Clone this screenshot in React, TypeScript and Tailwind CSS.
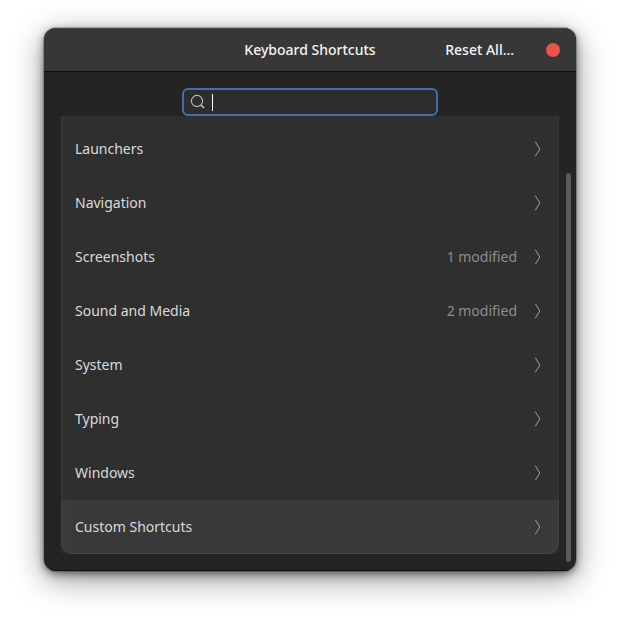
import React from "react";

type Category = { name: string; modified?: number };

const categories: Category[] = [
  { name: "Launchers" },
  { name: "Navigation" },
  { name: "Screenshots", modified: 1 },
  { name: "Sound and Media", modified: 2 },
  { name: "System" },
  { name: "Typing" },
  { name: "Windows" },
  { name: "Custom Shortcuts" },
];

function Chevron() {
  return (
    <svg aria-hidden="true" className="h-4 w-2 shrink-0" viewBox="0 0 8 16" fill="none" stroke="#a0a0a0" strokeWidth="1">
      <path d="M2.300 .8 6.800 8l-4.500 7.200" />
    </svg>
  );
}

function SearchIcon() {
  return (
    <svg aria-hidden="true" className="size-4 shrink-0" viewBox="0 0 16 16" fill="none" stroke="#bdbdbd">
      <circle cx="7" cy="7" r="5.600" strokeWidth="1.100" />
      <path d="m10.800 10.800 3.200 3.200" strokeWidth="1.700" />
    </svg>
  );
}

function HeaderBar() {
  return (
    <header className="grid h-11 grid-cols-[1fr_auto_1fr] items-center border-b border-[#101010] bg-[#373737] px-4 font-medium text-[#f4f4f4] shadow-[inset_0_1px_0_#464646]">
      <h1 className="col-start-2">Keyboard Shortcuts</h1>
      <div className="flex items-center justify-end gap-8">
        <button type="button">Reset All…</button>
        <button type="button" aria-label="Close" className="size-3.5 rounded-full bg-[#ec5349]" />
      </div>
    </header>
  );
}

function CategoryRow({ category }: { category: Category }) {
  return (
    <li className="last:bg-white/5">
      <button type="button" className="flex h-[54px] w-full items-center pr-[18px] pl-3.5 text-left">
        <span className="flex-1 text-[#dadada]">{category.name}</span>
        {category.modified && <span className="mr-4 text-[#8a8e8f]">{category.modified} modified</span>}
        <Chevron />
      </button>
    </li>
  );
}

export default function App() {
  return (
    <div className="bg-white px-11 pt-7 pb-[60px] font-['Noto_Sans','Open_Sans',sans-serif] text-[14px] leading-5">
      <div className="overflow-hidden rounded-xl bg-[#242424] shadow-[0_0_0_1px_rgba(0,0,0,0.2),0_3px_9px_rgba(0,0,0,0.5),0_8px_32px_rgba(0,0,0,0.42)]">
        <HeaderBar />
        <main className="flex gap-[7px] pr-[5px] pl-[17px] shadow-[inset_0_-1px_0_#111]">
          <div className="flex-1 pt-4 pb-[17px]">
            <label className="mx-auto flex h-7 w-64 items-center rounded-md border-2 border-[#426db3] bg-[#2d2d2d] pl-1.5">
              <SearchIcon />
              <span aria-hidden="true" className="ml-1.5 h-[17px] w-px shrink-0 bg-white" />
              <input
                type="text"
                aria-label="Search shortcuts"
                className="min-w-0 flex-1 bg-transparent text-[#eeeeee] caret-transparent outline-none"
              />
            </label>
            <div className="bg-[#2b2b2b]">
              <ul className="overflow-hidden rounded-b-xl bg-[linear-gradient(90deg,#323232,#2f2f2f_14px,#2f2f2f_calc(100%_-_14px),#323232)] pt-1.5 shadow-[1px_0_0_#393939_inset,-1px_0_0_#393939_inset,0_-1px_0_#414141_inset]">
                {categories.map((category) => (
                  <CategoryRow key={category.name} category={category} />
                ))}
              </ul>
            </div>
          </div>
          <div aria-hidden="true" className="mt-[101px] mb-[9px] w-[5px] rounded-full bg-[#595959]" />
        </main>
      </div>
    </div>
  );
}
